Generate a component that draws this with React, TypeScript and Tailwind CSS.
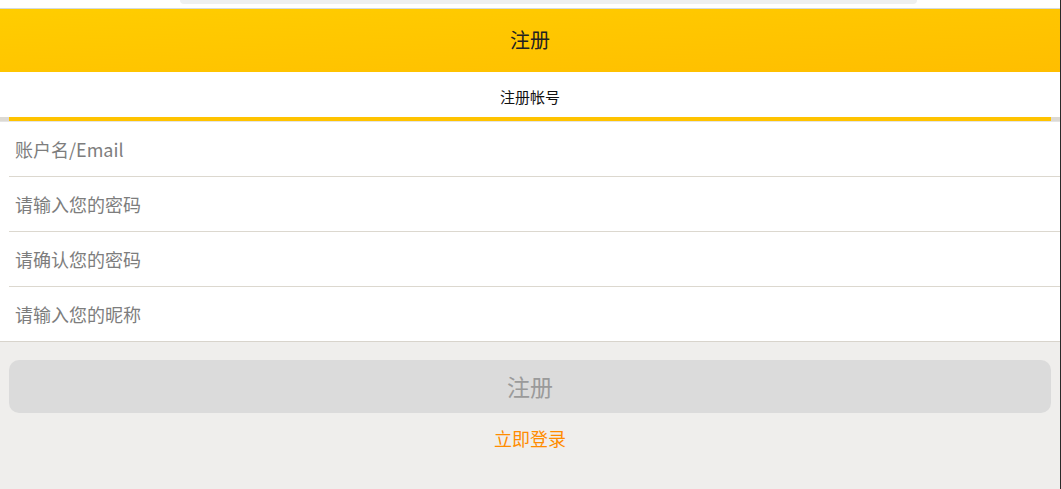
import React from "react";

const font = { fontFamily: '"Noto Sans CJK SC", "Noto Sans", sans-serif' };

function Row({ text }: { text: string }) {
  return (
    <div className="h-[55px] flex items-center ml-[9px] border-b border-[#dcd8cf]">
      <span className="pl-[6px] text-[18px] text-[#7d7d7d]">{text}</span>
    </div>
  );
}

export default function App() {
  return (
    <div className="w-[1061px] h-[489px] flex bg-white overflow-hidden" style={font}>
      <div className="w-[1060px] h-full flex flex-col bg-[#efeeec]">
        <div className="h-[8px] bg-white flex justify-start">
          <div className="ml-[180px] w-[737px] h-[4px] bg-[#eef0f1] rounded-b-[6px]" />
        </div>
        <div className="h-[1px] bg-[#d3dadd]" />
        <div className="h-[63px] flex items-center justify-center bg-gradient-to-br from-[#ffcd00] to-[#ffbe00]">
          <span className="text-[20px] text-[#222] -translate-y-[1px]">注册</span>
        </div>
        <div className="h-[45px] bg-white flex items-center justify-center pt-[6px]">
          <span className="text-[15px] text-[#111]">注册帐号</span>
        </div>
        <div className="h-[4px] bg-[#dcd9d3] px-[9px] flex">
          <div className="flex-1 bg-[#ffc300]" />
        </div>
        <div className="h-[1px] bg-[#e4e4e4]" />
        <div className="bg-white border-b border-[#d8d4cc]">
          <Row text="账户名/Email" />
          <Row text="请输入您的密码" />
          <Row text="请确认您的密码" />
          <div className="h-[54px] flex items-center">
            <span className="pl-[15px] text-[18px] text-[#7d7d7d]">请输入您的昵称</span>
          </div>
        </div>
        <div className="mt-[18px] mx-[9px] h-[53px] rounded-[10px] bg-[#dbdbdb] flex items-center justify-center">
          <span className="text-[23px] text-[#9a9a9a]">注册</span>
        </div>
        <div className="mt-[12px] flex justify-center">
          <span className="text-[18px] text-[#ff8c00]">立即登录</span>
        </div>
      </div>
      <div className="w-[1px] h-full bg-[#2a2a2a]" />
    </div>
  );
}
